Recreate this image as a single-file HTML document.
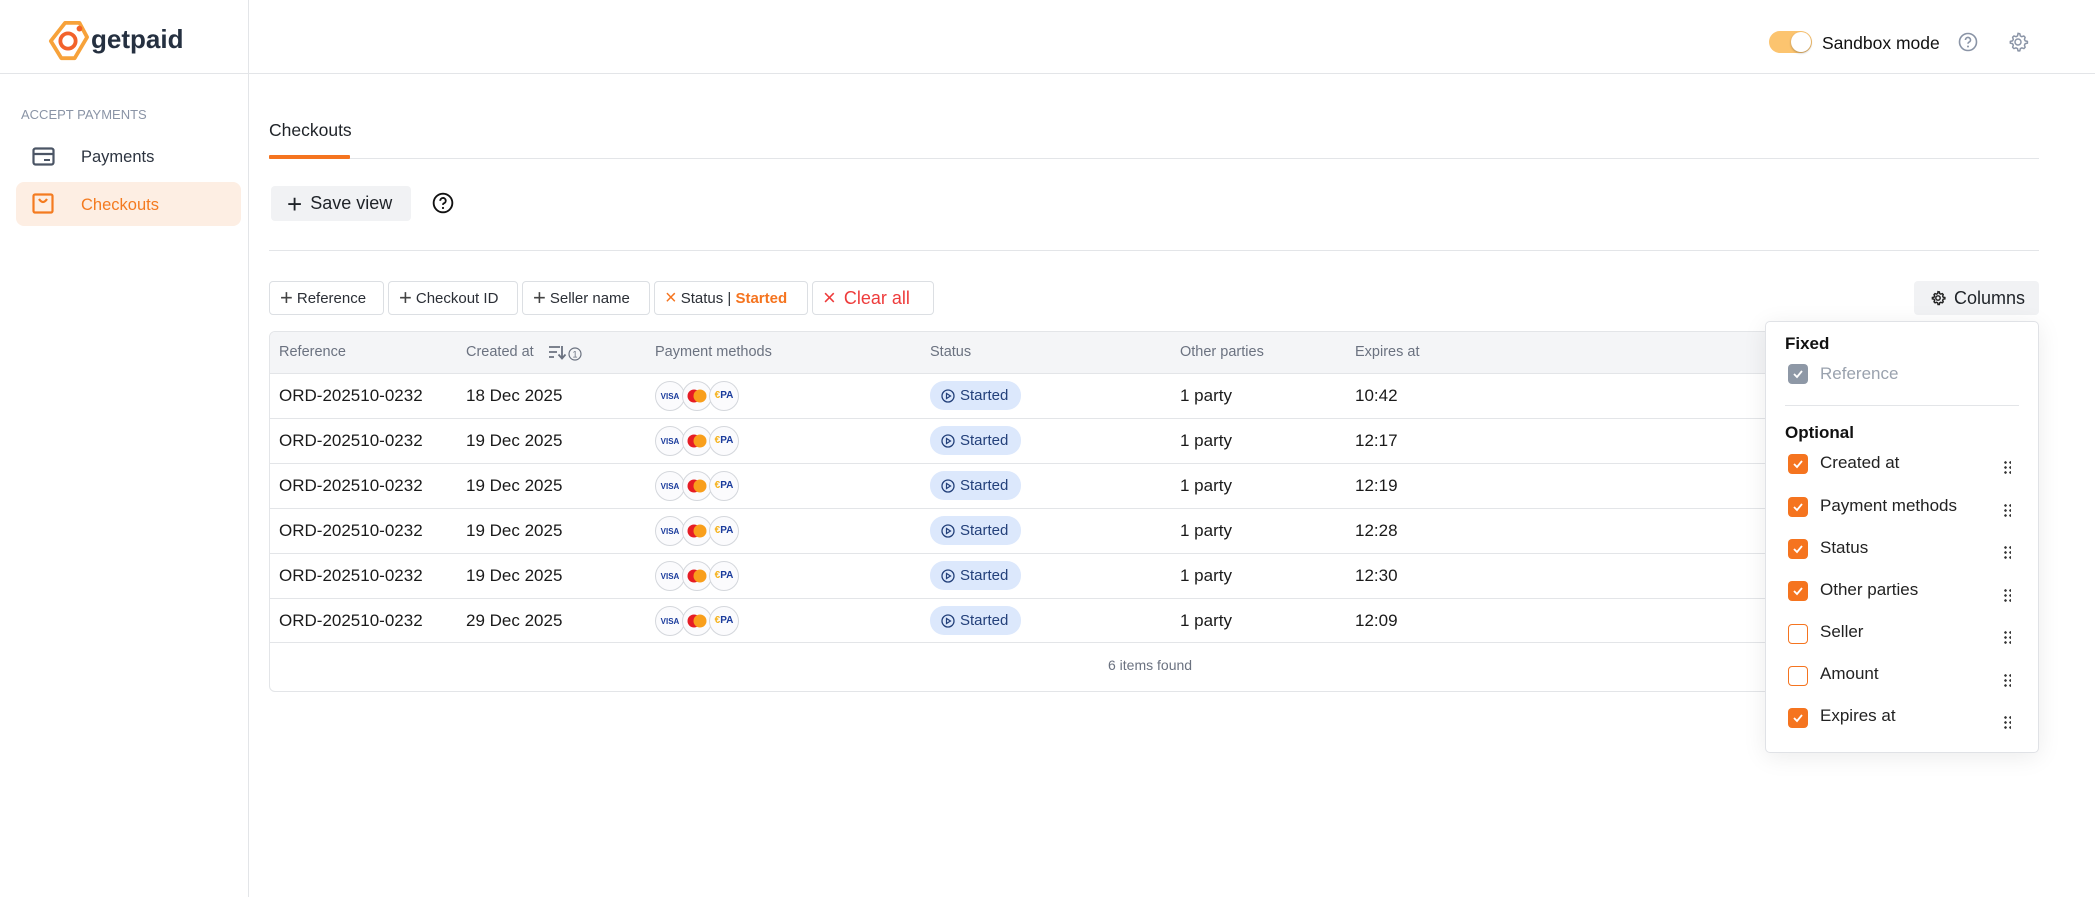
<!DOCTYPE html>
<html><head><meta charset="utf-8"><style>
*{box-sizing:border-box;margin:0;padding:0}
body{width:2095px;height:897px;overflow:hidden;background:#fff;font-family:"Liberation Sans",sans-serif;color:#1f2328;position:relative}
.abs{position:absolute}
.side{left:0;top:0;width:249px;height:897px;border-right:1px solid #e3e5e8}
.hdr{left:0;top:73px;width:2095px;height:1px;background:#e3e5e8}
.chip{position:absolute;top:281px;height:34px;border:1px solid #dcdfe3;border-radius:4px;font-size:15px;display:flex;align-items:center;padding-left:10px;color:#2b2f36}
.chip .pl{font-size:22px;font-weight:300;margin-right:4px;color:#444;line-height:1}
.th{position:absolute;top:344px;font-size:14.5px;color:#6b7280}
.row{position:absolute;left:270px;width:1769px;height:45px;border-top:1px solid #e3e5e8}
.row span{position:absolute;top:12px;font-size:17px;color:#1a1a1a}
.badge{position:absolute;left:660px;top:7px;width:91px;height:29px;background:#dce8fc;border-radius:14px;font-size:15px;color:#23407a;display:flex;align-items:center;padding-left:11px}
.badge svg{margin-right:5px}
.pm{position:absolute;top:7px;width:30px;height:30px;border-radius:50%;border:1px solid #d4d7dc;background:#fbfbfd;font-size:8px;font-weight:bold;display:flex;align-items:center;justify-content:center;white-space:nowrap;overflow:hidden}
.pm.ep{display:block;text-align:center;line-height:28px;font-size:10px;color:#1a3b9c}
.row .pm.ep b{position:static;font-size:10px;color:#f5b21b}
.cb{position:absolute;left:1788px;width:20px;height:20px;border-radius:4px;background:#f5741f;display:flex;align-items:center;justify-content:center}
.cb.e{background:#fff;border:1.5px solid #f5741f}
.lbl{position:absolute;left:1820px;font-size:17px;color:#222}
.dr{position:absolute;left:2003px;width:8px;height:14px;background-image:radial-gradient(circle,#333 1.2px,transparent 1.4px);background-size:5px 5px}
</style></head><body>
<div class="abs side"></div>
<div class="abs hdr"></div>
<svg class="abs" style="left:46px;top:20px" width="44" height="42" viewBox="0 0 46 44"><path d="M20 3 L35 3 L43 18 L30 40 L16 40 L5 22 Z" fill="none" stroke="#f7a23a" stroke-width="4" stroke-linejoin="round"/><circle cx="23" cy="22" r="8" fill="none" stroke="#f2622b" stroke-width="4"/><circle cx="35" cy="9" r="3" fill="#f2622b"/></svg>
<div class="abs" style="left:91px;top:24px;font-size:26px;font-weight:bold;color:#253040">getpaid</div>
<div class="abs" style="left:21px;top:107px;font-size:13px;color:#8a94a6">ACCEPT PAYMENTS</div>
<svg class="abs" style="left:32px;top:147px" width="23" height="19" viewBox="0 0 23 19"><rect x="1.5" y="1.5" width="20" height="16" rx="2" fill="none" stroke="#4b5565" stroke-width="2.2"/><line x1="1.5" y1="7" x2="21.5" y2="7" stroke="#4b5565" stroke-width="2.2"/><line x1="12" y1="13" x2="18" y2="13" stroke="#4b5565" stroke-width="2"/></svg>
<div class="abs" style="left:81px;top:148px;font-size:16.5px;color:#2d3440">Payments</div>
<div class="abs" style="left:16px;top:182px;width:225px;height:44px;background:#fdeee3;border-radius:8px"></div>
<svg class="abs" style="left:32px;top:193px" width="22" height="21" viewBox="0 0 22 21"><rect x="1.5" y="1.5" width="19" height="18" rx="1.5" fill="none" stroke="#f47b20" stroke-width="2.2"/><path d="M7 6 Q11 12 15 6" fill="none" stroke="#f47b20" stroke-width="2.2"/></svg>
<div class="abs" style="left:81px;top:196px;font-size:16.5px;color:#f47b20">Checkouts</div>
<div class="abs" style="left:1769px;top:31px;width:43px;height:22px;border-radius:11px;background:#fcc46f"></div>
<div class="abs" style="left:1791px;top:32px;width:20px;height:20px;border-radius:50%;background:#fff;box-shadow:0 1px 2px rgba(0,0,0,.3)"></div>
<div class="abs" style="left:1822px;top:33px;font-size:17.5px;color:#111">Sandbox mode</div>
<svg class="abs" style="left:1958px;top:32px" width="20" height="20" viewBox="0 0 20 20"><circle cx="10" cy="10" r="8.5" fill="none" stroke="#8a94a6" stroke-width="1.6"/><path d="M7.5 8a2.5 2.5 0 1 1 3.3 2.3c-.6.3-.8.7-.8 1.4" fill="none" stroke="#8a94a6" stroke-width="1.6"/><circle cx="10" cy="14.5" r="1" fill="#8a94a6"/></svg>
<svg class="abs" style="left:2007px;top:31px" width="22" height="22" viewBox="0 0 24 24"><path d="M12 2.5l2 .4.5 2.4 1.6.9 2.3-.8 1.4 1.5-.8 2.3.9 1.6 2.4.5v2l-2.4.5-.9 1.6.8 2.3-1.4 1.5-2.3-.8-1.6.9-.5 2.4h-2l-.5-2.4-1.6-.9-2.3.8-1.5-1.5.8-2.3-.9-1.6-2.4-.5v-2l2.4-.5.9-1.6-.8-2.3 1.5-1.5 2.3.8 1.6-.9.5-2.4z" fill="none" stroke="#8a94a6" stroke-width="1.6" stroke-linejoin="round"/><circle cx="12" cy="12" r="3.3" fill="none" stroke="#8a94a6" stroke-width="1.6"/></svg>
<div class="abs" style="left:269px;top:120px;font-size:17.5px;color:#1f2328">Checkouts</div>
<div class="abs" style="left:269px;top:158px;width:1770px;height:1px;background:#e3e5e8"></div>
<div class="abs" style="left:269px;top:155px;width:81px;height:4px;background:#f5741f;border-radius:1px"></div>
<div class="abs" style="left:271px;top:186px;width:140px;height:35px;background:#f1f2f4;border-radius:4px;display:flex;align-items:center;padding-left:16px;font-size:18px;color:#1f2328"><span style="font-size:26px;font-weight:300;margin-right:8px;line-height:1">+</span>Save view</div>
<svg class="abs" style="left:432px;top:192px" width="22" height="22" viewBox="0 0 20 20"><circle cx="10" cy="10" r="8.5" fill="none" stroke="#111" stroke-width="1.7"/><path d="M7.5 8a2.5 2.5 0 1 1 3.3 2.3c-.6.3-.8.7-.8 1.4" fill="none" stroke="#111" stroke-width="1.7"/><circle cx="10" cy="14.5" r="1" fill="#111"/></svg>
<div class="abs" style="left:269px;top:250px;width:1770px;height:1px;background:#e3e5e8"></div>
<div class="chip" style="left:269px;width:115px"><span class="pl">+</span>Reference</div>
<div class="chip" style="left:388px;width:130px"><span class="pl">+</span>Checkout ID</div>
<div class="chip" style="left:522px;width:128px"><span class="pl">+</span>Seller name</div>
<div class="chip" style="left:654px;width:154px"><span class="pl" style="color:#f5741f;font-size:20px">×</span>Status |&nbsp;<b style="color:#f5741f">Started</b></div>
<div class="chip" style="left:812px;width:122px;color:#ee3b3b;font-size:18px"><span class="pl" style="color:#ee3b3b;font-size:22px;margin-right:8px">×</span>Clear all</div>
<div class="abs" style="left:1914px;top:281px;width:125px;height:34px;background:#f1f2f4;border-radius:4px;display:flex;align-items:center;padding-left:16px;font-size:18px;color:#1f2328"><svg width="16" height="16" viewBox="0 0 24 24" style="margin-right:8px"><path d="M12 2.5l2 .4.5 2.4 1.6.9 2.3-.8 1.4 1.5-.8 2.3.9 1.6 2.4.5v2l-2.4.5-.9 1.6.8 2.3-1.4 1.5-2.3-.8-1.6.9-.5 2.4h-2l-.5-2.4-1.6-.9-2.3.8-1.5-1.5.8-2.3-.9-1.6-2.4-.5v-2l2.4-.5.9-1.6-.8-2.3 1.5-1.5 2.3.8 1.6-.9.5-2.4z" fill="none" stroke="#222" stroke-width="2.2"/><circle cx="12" cy="12" r="3.3" fill="none" stroke="#222" stroke-width="2.2"/></svg>Columns</div>
<div class="abs" style="left:269px;top:331px;width:1770px;height:361px;border:1px solid #e3e5e8;border-radius:6px;overflow:hidden">
<div style="height:42px;background:#f4f5f7"></div></div>
<div class="th" style="left:279px">Reference</div>
<div class="th" style="left:466px">Created at</div>
<svg class="abs" style="left:548px;top:343px" width="36" height="20" viewBox="0 0 36 20"><path d="M1 4h11M1 9h8M1 14h5" stroke="#6b7280" stroke-width="1.8"/><path d="M14 3v12M10.5 11.5 14 15.5l3.5-4" fill="none" stroke="#6b7280" stroke-width="1.8"/><circle cx="27" cy="11" r="6" fill="none" stroke="#6b7280" stroke-width="1.2"/><text x="27" y="14.5" font-size="9" text-anchor="middle" fill="#6b7280" font-family="Liberation Sans">1</text></svg>
<div class="th" style="left:655px">Payment methods</div>
<div class="th" style="left:930px">Status</div>
<div class="th" style="left:1180px">Other parties</div>
<div class="th" style="left:1355px">Expires at</div>

<div class="row" style="top:373px"><span style="left:9px">ORD-202510-0232</span><span style="left:196px">18 Dec 2025</span><div class="pm" style="left:385px;color:#1a3b9c">VISA</div><div class="pm" style="left:412px"><svg width="20" height="14"><circle cx="7" cy="7" r="6.5" fill="#e61c24"/><circle cx="13" cy="7" r="6.5" fill="#f99f1b"/></svg></div><div class="pm ep" style="left:439px"><b>€</b>PA</div><div class="badge"><svg width="14" height="14" viewBox="0 0 14 14"><circle cx="7" cy="7" r="6" fill="none" stroke="#23407a" stroke-width="1.3"/><path d="M5.5 4.5v5l4-2.5z" fill="none" stroke="#23407a" stroke-width="1.2"/></svg>Started</div><span style="left:910px">1 party</span><span style="left:1085px">10:42</span></div>
<div class="row" style="top:418px"><span style="left:9px">ORD-202510-0232</span><span style="left:196px">19 Dec 2025</span><div class="pm" style="left:385px;color:#1a3b9c">VISA</div><div class="pm" style="left:412px"><svg width="20" height="14"><circle cx="7" cy="7" r="6.5" fill="#e61c24"/><circle cx="13" cy="7" r="6.5" fill="#f99f1b"/></svg></div><div class="pm ep" style="left:439px"><b>€</b>PA</div><div class="badge"><svg width="14" height="14" viewBox="0 0 14 14"><circle cx="7" cy="7" r="6" fill="none" stroke="#23407a" stroke-width="1.3"/><path d="M5.5 4.5v5l4-2.5z" fill="none" stroke="#23407a" stroke-width="1.2"/></svg>Started</div><span style="left:910px">1 party</span><span style="left:1085px">12:17</span></div>
<div class="row" style="top:463px"><span style="left:9px">ORD-202510-0232</span><span style="left:196px">19 Dec 2025</span><div class="pm" style="left:385px;color:#1a3b9c">VISA</div><div class="pm" style="left:412px"><svg width="20" height="14"><circle cx="7" cy="7" r="6.5" fill="#e61c24"/><circle cx="13" cy="7" r="6.5" fill="#f99f1b"/></svg></div><div class="pm ep" style="left:439px"><b>€</b>PA</div><div class="badge"><svg width="14" height="14" viewBox="0 0 14 14"><circle cx="7" cy="7" r="6" fill="none" stroke="#23407a" stroke-width="1.3"/><path d="M5.5 4.5v5l4-2.5z" fill="none" stroke="#23407a" stroke-width="1.2"/></svg>Started</div><span style="left:910px">1 party</span><span style="left:1085px">12:19</span></div>
<div class="row" style="top:508px"><span style="left:9px">ORD-202510-0232</span><span style="left:196px">19 Dec 2025</span><div class="pm" style="left:385px;color:#1a3b9c">VISA</div><div class="pm" style="left:412px"><svg width="20" height="14"><circle cx="7" cy="7" r="6.5" fill="#e61c24"/><circle cx="13" cy="7" r="6.5" fill="#f99f1b"/></svg></div><div class="pm ep" style="left:439px"><b>€</b>PA</div><div class="badge"><svg width="14" height="14" viewBox="0 0 14 14"><circle cx="7" cy="7" r="6" fill="none" stroke="#23407a" stroke-width="1.3"/><path d="M5.5 4.5v5l4-2.5z" fill="none" stroke="#23407a" stroke-width="1.2"/></svg>Started</div><span style="left:910px">1 party</span><span style="left:1085px">12:28</span></div>
<div class="row" style="top:553px"><span style="left:9px">ORD-202510-0232</span><span style="left:196px">19 Dec 2025</span><div class="pm" style="left:385px;color:#1a3b9c">VISA</div><div class="pm" style="left:412px"><svg width="20" height="14"><circle cx="7" cy="7" r="6.5" fill="#e61c24"/><circle cx="13" cy="7" r="6.5" fill="#f99f1b"/></svg></div><div class="pm ep" style="left:439px"><b>€</b>PA</div><div class="badge"><svg width="14" height="14" viewBox="0 0 14 14"><circle cx="7" cy="7" r="6" fill="none" stroke="#23407a" stroke-width="1.3"/><path d="M5.5 4.5v5l4-2.5z" fill="none" stroke="#23407a" stroke-width="1.2"/></svg>Started</div><span style="left:910px">1 party</span><span style="left:1085px">12:30</span></div>
<div class="row" style="top:598px"><span style="left:9px">ORD-202510-0232</span><span style="left:196px">29 Dec 2025</span><div class="pm" style="left:385px;color:#1a3b9c">VISA</div><div class="pm" style="left:412px"><svg width="20" height="14"><circle cx="7" cy="7" r="6.5" fill="#e61c24"/><circle cx="13" cy="7" r="6.5" fill="#f99f1b"/></svg></div><div class="pm ep" style="left:439px"><b>€</b>PA</div><div class="badge"><svg width="14" height="14" viewBox="0 0 14 14"><circle cx="7" cy="7" r="6" fill="none" stroke="#23407a" stroke-width="1.3"/><path d="M5.5 4.5v5l4-2.5z" fill="none" stroke="#23407a" stroke-width="1.2"/></svg>Started</div><span style="left:910px">1 party</span><span style="left:1085px">12:09</span></div>
<div class="row" style="top:642px;height:1px"></div>
<div class="abs" style="left:1108px;top:657px;font-size:14px;color:#6b7280">6 items found</div>
<div class="abs" style="left:1765px;top:321px;width:274px;height:432px;background:#fff;border:1px solid #e0e2e6;border-radius:5px;box-shadow:0 4px 24px rgba(0,0,0,.08)"></div>
<div class="abs" style="left:1785px;top:334px;font-size:17px;font-weight:bold;color:#111">Fixed</div>
<div class="cb" style="top:364px;background:#8e98a6"><svg width="12" height="10"><path d="M2 5l3 3 5-6" fill="none" stroke="#fff" stroke-width="1.8"/></svg></div>
<div class="lbl" style="top:364px;color:#9aa2ae">Reference</div>
<div class="abs" style="left:1785px;top:405px;width:234px;height:1px;background:#e3e5e8"></div>
<div class="abs" style="left:1785px;top:423px;font-size:17px;font-weight:bold;color:#111">Optional</div>
<div class="cb" style="top:454px"><svg width="12" height="10"><path d="M2 5l3 3 5-6" fill="none" stroke="#fff" stroke-width="1.8"/></svg></div><div class="lbl" style="top:453px">Created at</div><div class="dr" style="top:460px"></div>
<div class="cb" style="top:497px"><svg width="12" height="10"><path d="M2 5l3 3 5-6" fill="none" stroke="#fff" stroke-width="1.8"/></svg></div><div class="lbl" style="top:496px">Payment methods</div><div class="dr" style="top:503px"></div>
<div class="cb" style="top:539px"><svg width="12" height="10"><path d="M2 5l3 3 5-6" fill="none" stroke="#fff" stroke-width="1.8"/></svg></div><div class="lbl" style="top:538px">Status</div><div class="dr" style="top:545px"></div>
<div class="cb" style="top:581px"><svg width="12" height="10"><path d="M2 5l3 3 5-6" fill="none" stroke="#fff" stroke-width="1.8"/></svg></div><div class="lbl" style="top:580px">Other parties</div><div class="dr" style="top:588px"></div>
<div class="cb e" style="top:624px"></div><div class="lbl" style="top:622px">Seller</div><div class="dr" style="top:630px"></div>
<div class="cb e" style="top:666px"></div><div class="lbl" style="top:664px">Amount</div><div class="dr" style="top:673px"></div>
<div class="cb" style="top:708px"><svg width="12" height="10"><path d="M2 5l3 3 5-6" fill="none" stroke="#fff" stroke-width="1.8"/></svg></div><div class="lbl" style="top:706px">Expires at</div><div class="dr" style="top:715px"></div>
</body></html>
